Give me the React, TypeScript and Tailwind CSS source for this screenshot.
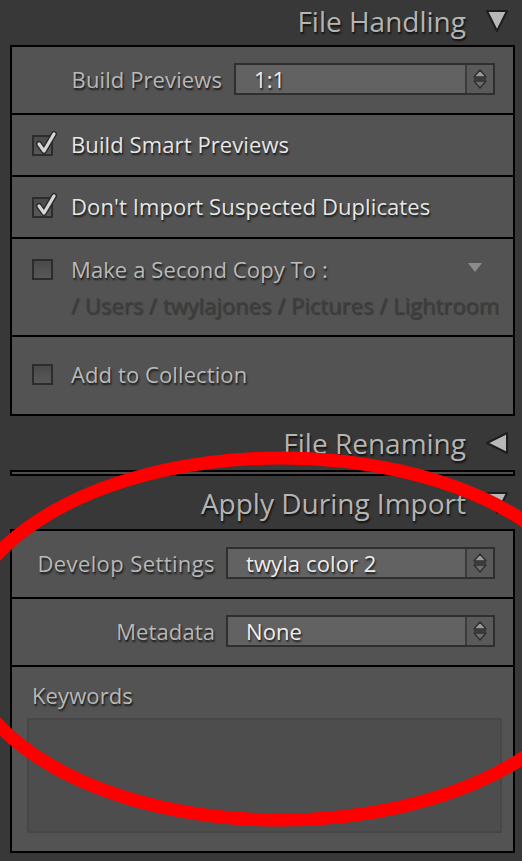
import React from "react";

const font = "font-['Open_Sans','Liberation_Sans',sans-serif]";
const shadow = "[text-shadow:1px_2px_2px_rgba(0,0,0,0.75)]";
const rowText = "text-[22px] tracking-[0.1px]";

function Stepper() {
    return (
        <svg width="16" height="24" viewBox="0 0 16 24">
            <path d="M8 3 L14 10 L2 10 Z" fill="#9c9c9c" stroke="#2e2e2e" strokeWidth="1.3" strokeLinejoin="round" />
            <line x1="2" y1="12" x2="14" y2="12" stroke="#2e2e2e" strokeWidth="1.3" />
            <path d="M2 14 L14 14 L8 21 Z" fill="#6c6c6c" stroke="#2e2e2e" strokeWidth="1.3" strokeLinejoin="round" />
        </svg>
    );
}

function Select({ value, width }: { value: string; width: string }) {
    return (
        <div className={`flex h-[32px] ${width} border-2 border-[#2f2f2f] bg-[#626262]`}>
            <div className={`flex-1 flex items-center pl-[18px] ${rowText} text-[#eeeeee] ${shadow}`}>
                {value}
            </div>
            <div className="w-[28px] flex items-center justify-center border-l-2 border-[#3c3c3c] bg-[#5a5a5a]">
                <Stepper />
            </div>
        </div>
    );
}

function Checkbox({ checked }: { checked?: boolean }) {
    return (
        <div className="relative w-[21px] h-[21px] shrink-0 border-2 border-[#2c2c2c] bg-gradient-to-b from-[#4a4a4a] to-[#585858]">
            {checked && (
                <svg className="absolute left-[1px] -top-[8px]" width="22" height="26" viewBox="0 0 22 26">
                    <path d="M4 15 L9 22 L19 5" fill="none" stroke="#2a2a2a" strokeWidth="6" strokeLinecap="round" strokeLinejoin="round" />
                    <path d="M4 15 L9 22 L19 5" fill="none" stroke="#d6d6d6" strokeWidth="3.2" strokeLinecap="round" strokeLinejoin="round" />
                </svg>
            )}
        </div>
    );
}

function SectionHeader({ title, open, className }: { title: string; open: boolean; className: string }) {
    return (
        <div className={`flex items-center justify-end pr-[13px] ${className}`}>
            <span className={`text-[28px] text-[#b4b4b4] ${shadow}`}>{title}</span>
            <svg className="ml-[19px]" width="24" height="24" viewBox="0 0 24 24">
                {open ? (
                    <path d="M2 2 L22 2 L12 22 Z" fill="#b8b8b8" stroke="#1e1e1e" strokeWidth="2" strokeLinejoin="round" />
                ) : (
                    <path d="M2 12 L22 2 L22 22 Z" fill="#b8b8b8" stroke="#1e1e1e" strokeWidth="2" strokeLinejoin="round" />
                )}
            </svg>
        </div>
    );
}

export default function App() {
    return (
        <div className={`relative w-[522px] h-[861px] overflow-hidden bg-[#383838] ${font}`}>
            {/* File Handling */}
            <SectionHeader title="File Handling" open className="h-[45px] pb-[4px]" />

            <div className="ml-[10px] mr-[7px] border-2 border-black bg-[#535353] divide-y-2 divide-black">
                <div className="h-[68px] flex items-center justify-end gap-[12px] pr-[18px] pb-[2px]">
                    <span className={`${rowText} text-[#b8b8b8] ${shadow}`}>Build Previews</span>
                    <Select value="1:1" width="w-[261px]" />
                </div>

                <div className="h-[62px] flex items-center gap-[18px] pl-[20px]">
                    <Checkbox checked />
                    <span className={`${rowText} text-[#e6e6e6] ${shadow} -mt-[2px]`}>Build Smart Previews</span>
                </div>

                <div className="h-[62px] flex items-center gap-[18px] pl-[20px]">
                    <Checkbox checked />
                    <span className={`${rowText} text-[#e6e6e6] ${shadow} -mt-[2px]`}>Don't Import Suspected Duplicates</span>
                </div>

                <div className="h-[98px] pl-[20px] pr-[8px] pt-[14px] relative">
                    <div className="flex items-center gap-[18px]">
                        <Checkbox />
                        <span className={`${rowText} text-[#bababa] ${shadow}`}>Make a Second Copy To :</span>
                    </div>
                    <div className="pl-[39px] mt-[3px] text-[22px] text-[#3e3e3e] whitespace-nowrap [text-shadow:1px_1px_1px_rgba(0,0,0,0.35)]">
                        / Users / twylajones / Pictures / Lightroom
                    </div>
                    <svg className="absolute right-[31px] top-[24px]" width="14" height="9" viewBox="0 0 14 9">
                        <path d="M0 0 L14 0 L7 9 Z" fill="#8c8c8c" />
                    </svg>
                </div>

                <div className="h-[77px] flex items-center gap-[18px] pl-[20px] pb-[2px]">
                    <Checkbox />
                    <span className={`${rowText} text-[#bababa] ${shadow}`}>Add to Collection</span>
                </div>
            </div>

            {/* File Renaming (collapsed) */}
            <SectionHeader title="File Renaming" open={false} className="h-[54px]" />
            <div className="ml-[10px] mr-[7px] h-[6px] border-2 border-black bg-[#4e4e4e]" />

            {/* Apply During Import */}
            <SectionHeader title="Apply During Import" open className="h-[53px] pt-[1px]" />

            <div className="ml-[10px] mr-[7px] border-2 border-black bg-[#535353] divide-y-2 divide-black">
                <div className="h-[68px] flex items-center justify-end gap-[11px] pr-[18px] pb-[2px]">
                    <span className={`${rowText} text-[#b8b8b8] ${shadow} tracking-[0.4px]`}>Develop Settings</span>
                    <Select value="twyla color 2" width="w-[269px]" />
                </div>

                <div className="h-[68px] flex items-center justify-end gap-[11px] pr-[18px] pb-[2px]">
                    <span className={`${rowText} text-[#b8b8b8] ${shadow}`}>Metadata</span>
                    <Select value="None" width="w-[269px]" />
                </div>

                <div className="h-[184px] pl-[15px] pr-[11px] pt-[12px]">
                    <div className={`pl-[5px] ${rowText} text-[#b8b8b8] ${shadow}`}>Keywords</div>
                    <div className="mt-[6px] h-[115px] border-2 border-[#474747] bg-[#4d4d4d]" />
                </div>
            </div>

            {/* annotation */}
            <svg className="absolute inset-0 pointer-events-none" width="522" height="861" viewBox="0 0 522 861">
                <ellipse cx="281" cy="639" rx="321" ry="181" fill="none" stroke="#ff0000" strokeWidth="13" />
            </svg>
        </div>
    );
}
